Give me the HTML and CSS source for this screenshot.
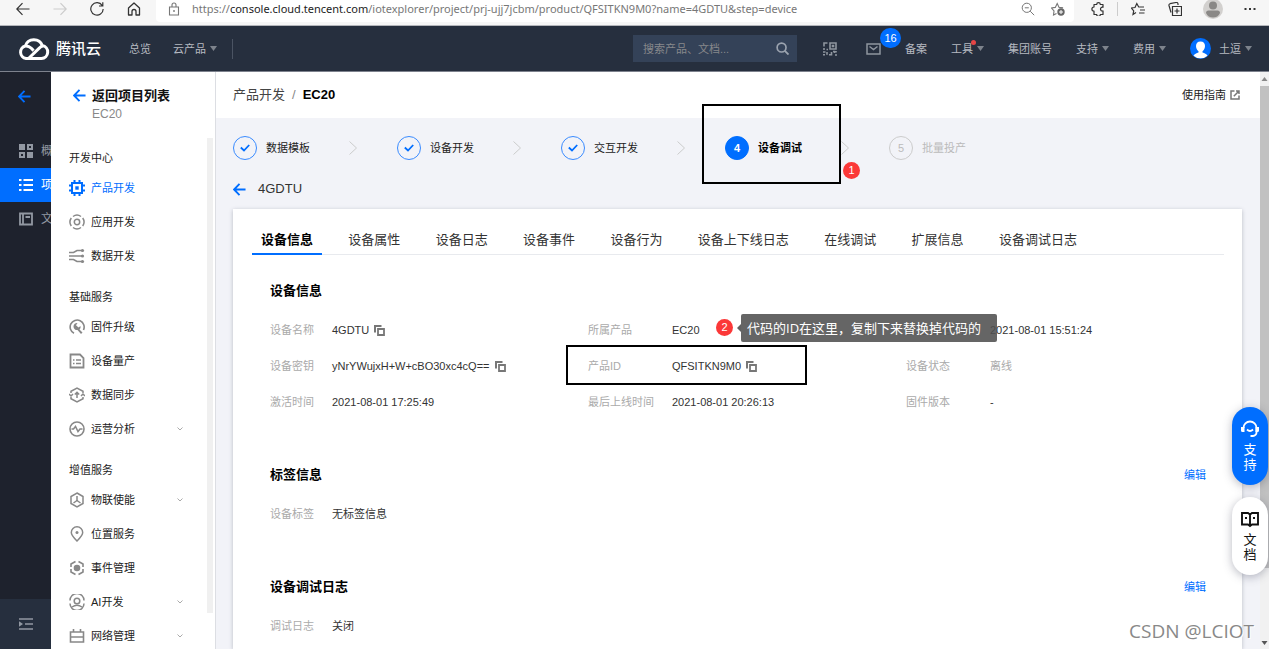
FILE: index.html
```html
<!DOCTYPE html>
<html lang="zh-CN">
<head>
<meta charset="utf-8">
<title>物联网开发平台 - 4GDTU</title>
<link rel="stylesheet" href="styles.css">
</head>
<body>
<svg class="sprite" aria-hidden="true">
  <symbol id="arrow-left" viewBox="0 0 14 14"><path d="M13.500 7H1.500M7 1L1.200 7 7 13" fill="none" stroke="currentColor" stroke-width="2"/></symbol>
  <symbol id="caret" viewBox="0 0 7 5"><path d="M0 0h7L3.500 5z" fill="currentColor"/></symbol>
  <symbol id="chevron-down" viewBox="0 0 8 8"><path d="M1.500 2.500L4 5l2.500-2.500" fill="none" stroke="currentColor"/></symbol>
  <symbol id="chevron-right" viewBox="0 0 8 14"><path d="M.5.5L7.500 7 .5 13.500" fill="none" stroke="currentColor"/></symbol>
  <symbol id="check" viewBox="0 0 10 8"><path d="M.8 3.500L4 6.500 9.200 1" fill="none" stroke="currentColor" stroke-width="1.800"/></symbol>
  <symbol id="copy" viewBox="0 0 11 11"><path d="M1 7.500V1h6.500" fill="none" stroke="currentColor" stroke-width="2"/><path d="M4 4h6v6H4z" fill="none" stroke="currentColor" stroke-width="1.800"/></symbol>
</svg>

<div class="browser">
  <button class="nav-btn" aria-label="后退"><svg viewBox="0 0 14 14"><path d="M13.500 7H1M6.500 1.200L.8 7l5.700 5.800" fill="none" stroke="currentColor" stroke-width="1.200"/></svg></button>
  <button class="nav-btn faded" aria-label="前进"><svg viewBox="0 0 14 14"><path d="M.5 7H13M7.500 1.200L13.200 7l-5.700 5.800" fill="none" stroke="currentColor" stroke-width="1.200"/></svg></button>
  <button class="nav-btn" aria-label="刷新"><svg viewBox="0 0 14 14"><path d="M12.200 3.500A6.200 6.200 0 1 0 13.200 7M12.800.3v3.700H9" fill="none" stroke="currentColor" stroke-width="1.200"/></svg></button>
  <button class="nav-btn" aria-label="主页"><svg viewBox="0 0 14 14"><path d="M1.500 6L7 1l5.500 5v7H9V9.500a2 2 0 0 0-4 0V13H1.500z" fill="none" stroke="currentColor" stroke-width="1.300" stroke-linejoin="round"/></svg></button>
  <div class="address">
    <svg class="lock" viewBox="0 0 12 14"><path d="M1.500 5h9v8h-9zM4 5V3a2 2 0 0 1 4 0v2" fill="none" stroke="currentColor" stroke-width="1.100"/><circle cx="6" cy="9" r=".9" fill="currentColor"/></svg>
    <span class="url">https://<b>console.cloud.tencent.com</b>/iotexplorer/project/prj-ujj7jcbm/product/QFSITKN9M0?name=4GDTU&amp;step=device</span>
    <button class="nav-btn grey" aria-label="缩放"><svg viewBox="0 0 14 14"><circle cx="5.800" cy="5.800" r="4.600" fill="none" stroke="currentColor"/><path d="M9.200 9.200l4 4M3.800 5.800h4" stroke="currentColor"/></svg></button>
    <button class="nav-btn grey" aria-label="收藏"><svg viewBox="0 0 14 14"><path d="M5.500 11.500L2.500 13l.5-4L.5 6l3.800-.6L6.200 1.500l1.900 3.900 4 .5" fill="none" stroke="currentColor" stroke-width="1.100"/><circle cx="10" cy="10" r="3.700" fill="#666"/><path d="M10 8v4M8 10h4" stroke="#fff"/></svg></button>
  </div>
  <button class="nav-btn" aria-label="扩展"><svg viewBox="0 0 14 14"><path d="M3 5V2.500h2.700a1.800 1.800 0 0 1 3.600 0H12V5.300a1.900 1.900 0 1 0 0 3.600v3.600H9.300a1.800 1.800 0 0 1-3.600 0H3V9.200A2.100 2.100 0 0 1 3 5z" fill="none" stroke="currentColor" stroke-width="1.200" stroke-linejoin="round"/></svg></button>
  <span class="separator"></span>
  <button class="nav-btn" aria-label="收藏夹"><svg viewBox="0 0 14 14"><path d="M5 10.500L2 12.500l.7-3.700L.3 6l3.700-.5L5.800 1.500l1.900 3.500H13M9 8h5M8 11h5.500" fill="none" stroke="currentColor" stroke-width="1.200"/></svg></button>
  <button class="nav-btn" aria-label="集锦"><svg viewBox="0 0 14 14"><path d="M4.500 4.500h9v9h-9zM9 6.500v5M6.500 9h5M3 10.500L1 3.500A1.500 1.500 0 0 1 2 1.700L8 .5a1.500 1.500 0 0 1 2 1.500v1" fill="none" stroke="currentColor" stroke-width="1.200"/></svg></button>
  <button class="profile" aria-label="个人资料"><svg viewBox="0 0 20 20"><circle cx="10" cy="10" r="10" fill="#d2d0ce"/><circle cx="10" cy="6.500" r="4" fill="#8a8886"/><path d="M3 14q0-2.500 2.500-2.500h9q2.500 0 2.500 2.500-2 4.500-7 4.500T3 14z" fill="#8a8886"/></svg></button>
  <button class="nav-btn" aria-label="更多"><svg viewBox="0 0 14 14"><path d="M1.500 6h2v2h-2zM6 6h2v2H6zM10.500 6h2v2h-2z" fill="currentColor"/></svg></button>
</div>

<header class="topbar">
  <a class="brand" href="#">
    <svg viewBox="0 0 32 24"><path d="M9 21.500h14.500a6.500 6.500 0 0 0 .8-12.900A9 9 0 0 0 7.300 9 6.400 6.400 0 0 0 8 21.500zM10.500 21.500L21 11.300q2-2 4-2.300M7.300 9q3.500-.3 6 2.300l2.300 2.300" fill="none" stroke="#fff" stroke-width="3" stroke-linejoin="round"/></svg>
    <span>腾讯云</span>
  </a>
  <nav class="main-nav">
    <a href="#">总览</a>
    <a href="#">云产品<svg class="caret"><use href="#caret"/></svg></a>
  </nav>
  <div class="tools">
    <form class="search">
      <input type="text" aria-label="搜索" placeholder="搜索产品、文档...">
      <button type="button" aria-label="搜索"><svg viewBox="0 0 14 14"><circle cx="6" cy="6" r="4.800" fill="none" stroke="currentColor" stroke-width="1.800"/><path d="M9.500 9.500l4 4" stroke="currentColor" stroke-width="2"/></svg></button>
    </form>
    <a class="scan" href="#" aria-label="二维码"><svg class="qr" viewBox="0 0 14 14"><path d="M4.500 1H1v3.500M1 6v2M7 1h6v6H7zM9.500 3.500h1v1h-1zM0 10h2.500M4 12.800V10M0 12.800h2M6 12.800h2.500V10M10 9.500h1.500v1.500M12 13h2M13 9v1.500M3.500 7.500h1.500" fill="none" stroke="currentColor" stroke-width="1.600"/></svg></a>
    <a class="mail" href="#" aria-label="消息"><svg viewBox="0 0 15 12"><path d="M1 1h13v10H1zM3.500 3.500l4 3 4-3" fill="none" stroke="currentColor" stroke-width="1.500"/></svg><span class="count">16</span></a>
    <a href="#">备案</a>
    <a class="dotted" href="#">工具<svg class="caret"><use href="#caret"/></svg></a>
    <a href="#">集团账号</a>
    <a href="#">支持<svg class="caret"><use href="#caret"/></svg></a>
    <a href="#">费用<svg class="caret"><use href="#caret"/></svg></a>
    <a class="account" href="#"><svg class="avatar" viewBox="0 0 21 21"><circle cx="10.500" cy="10.500" r="10.500" fill="#006eff"/><path d="M10.500 3.500c-3 0-4.500 2-4.500 4.500 0 2 1 4 2.500 5.200v1.300c-2 .8-4 1.300-5 3.200a10.500 10.500 0 0 0 14 0c-1-1.900-3-2.400-5-3.200v-1.300C14 12 15 10 15 8c0-2.500-1.500-4.500-4.500-4.500z" fill="#fff"/></svg>土逗<svg class="caret"><use href="#caret"/></svg></a>
  </div>
</header>

<div class="workspace">
  <nav class="rail">
    <a class="rail-back" href="#" aria-label="返回"><svg><use href="#arrow-left"/></svg></a>
    <a href="#"><svg viewBox="0 0 14 14"><path d="M0 0h6v6H0zM8 8h6v6H8z" fill="currentColor"/><path d="M9 1h4v4H9zM1 9h4v4H1z" fill="none" stroke="currentColor" stroke-width="2"/></svg>概览</a>
    <a class="active" href="#"><svg viewBox="0 0 14 14"><path d="M0 2h2.500M4.500 2H14M0 7h2.500M4.500 7H14M0 12h2.500M4.500 12H14" stroke="currentColor" stroke-width="2"/></svg>项目管理</a>
    <a href="#"><svg viewBox="0 0 14 14"><path d="M1 1.500h12v11H1zM4 1.500v11M6.500 5H11" fill="none" stroke="currentColor" stroke-width="1.800"/></svg>文档</a>
    <button class="collapse" aria-label="展开菜单"><svg viewBox="0 0 14 14"><path d="M0 2h14M6 7h8M0 12h14" stroke="currentColor" stroke-width="1.600"/><path d="M0 4.200L4 7 0 9.800z" fill="currentColor"/></svg></button>
  </nav>

  <aside class="sidebar">
    <div class="sidebar-head">
      <a href="#"><svg><use href="#arrow-left"/></svg>返回项目列表</a>
      <p>EC20</p>
    </div>
    <nav class="menu">
      <h2>开发中心</h2>
      <a class="active" href="#"><svg viewBox="0 0 16 16"><path d="M3 3h10v10H3z" fill="none" stroke="currentColor" stroke-width="2"/><path d="M6.300 6.300h3.400v3.400H6.300z" fill="currentColor"/><path d="M5.500 0v3M10.500 0v3M5.500 13v3M10.500 13v3M0 5.500h3M0 10.500h3M13 5.500h3M13 10.500h3" stroke="currentColor" stroke-width="2"/></svg>产品开发</a>
      <a href="#"><svg viewBox="0 0 16 16"><g fill="none" stroke="currentColor" stroke-width="1.500"><circle cx="8" cy="8" r="2.700"/><path d="M4 2.500a7 7 0 0 1 8 0M4 13.500a7 7 0 0 0 8 0M2.300 4a7 7 0 0 0 0 8M13.700 4a7 7 0 0 1 0 8"/></g></svg>应用开发</a>
      <a href="#"><svg viewBox="0 0 16 16"><path d="M0 4.500h4.500L8 2.500h6M0 8h14M0 11.500h4.500l3.500 2h6" fill="none" stroke="currentColor" stroke-width="1.600"/><g fill="currentColor"><circle cx="13.500" cy="2.500" r="1.600"/><circle cx="13.500" cy="8" r="1.600"/><circle cx="13.500" cy="13.500" r="1.600"/></g></svg>数据开发</a>
      <h2>基础服务</h2>
      <a href="#"><svg viewBox="0 0 16 16"><path d="M5 14.300A7 7 0 1 1 14.500 11" fill="none" stroke="currentColor" stroke-width="1.600"/><path d="M4.500 7.500A3.500 3.500 0 0 1 8.500 4L7 6.200 9.500 8.500 11.500 7a3.500 3.500 0 0 1-1 3.500l3 3-1.500 1.500-3.500-4a3.500 3.500 0 0 1-4-3.500z" fill="currentColor"/></svg>固件升级</a>
      <a href="#"><svg viewBox="0 0 16 16"><path d="M1.500 1.500h9.500l3.500 3.500v9.500h-13z" fill="none" stroke="currentColor" stroke-width="1.800"/><path d="M4 7h1.500M7 7h5M4 10.500h1.500M7 10.500h5" stroke="currentColor" stroke-width="1.600"/></svg>设备量产</a>
      <a href="#"><svg viewBox="0 0 16 16"><path d="M2 6V4.300L8 1l6 3.300V6M2 10v1.700L8 15l6-3.300V10M0 7l2 2 2-2M12 9l2-2 2 2M8 11V6M5.800 7.500L8 5.300l2.200 2.200" fill="none" stroke="currentColor" stroke-width="1.500"/></svg>数据同步</a>
      <a href="#"><svg viewBox="0 0 16 16"><circle cx="8" cy="8" r="7" fill="none" stroke="currentColor" stroke-width="1.600"/><path d="M2.500 8h2L6.500 5.500 9 10.500 11 8h2.500" fill="none" stroke="currentColor" stroke-width="1.500"/></svg>运营分析<svg class="more"><use href="#chevron-down"/></svg></a>
      <h2>增值服务</h2>
      <a href="#"><svg viewBox="0 0 16 16"><path d="M8 1l6 3.500v7L8 15l-6-3.500v-7zM8 4v4.500M8 8.500L4.500 11M8 8.500l3.500 2.500" fill="none" stroke="currentColor" stroke-width="1.500"/></svg>物联使能<svg class="more"><use href="#chevron-down"/></svg></a>
      <a href="#"><svg viewBox="0 0 16 16"><path d="M8 15C4.500 11.500 2.300 9 2.300 6.500a5.700 5.700 0 0 1 11.400 0C13.700 9 11.500 11.500 8 15z" fill="none" stroke="currentColor" stroke-width="1.500"/><circle cx="8" cy="6.500" r="1.500" fill="currentColor"/></svg>位置服务</a>
      <a href="#"><svg viewBox="0 0 16 16"><path d="M6.500 1.500L2 4v3M9.500 1.500L14 4v3M2 9v3l4.500 2.500M14 9v3l-4.500 2.500" fill="none" stroke="currentColor" stroke-width="1.600"/><circle cx="8" cy="8" r="3.300" fill="currentColor"/></svg>事件管理</a>
      <a href="#"><svg viewBox="0 0 16 16"><g fill="none" stroke="currentColor" stroke-width="1.500"><path d="M1 6.500a7 7 0 0 1 14 0M1 9.500a7 7 0 0 0 14 0M3 13q5-3.500 10 0"/><circle cx="8" cy="7" r="2.800"/></g></svg>AI开发<svg class="more"><use href="#chevron-down"/></svg></a>
      <a href="#"><svg viewBox="0 0 16 16"><path d="M1.500 4h13v10h-13zM1.500 9h13M4.500 1v3M11.500 1v3" fill="none" stroke="currentColor" stroke-width="1.600"/></svg>网络管理<svg class="more"><use href="#chevron-down"/></svg></a>
    </nav>
    <span class="menu-scroll"></span>
  </aside>

  <main class="content">
    <div class="crumbs">
      <a href="#">产品开发</a><i>/</i><strong>EC20</strong>
      <a class="guide" href="#">使用指南<svg viewBox="0 0 10 10"><path d="M4.500 1H1v8h8V5.500M3.800 6.200L8.500 1.500M6 1h3v3" fill="none" stroke="currentColor" stroke-width="1.500"/></svg></a>
    </div>

    <ol class="steps">
      <li class="done"><span class="mark"><svg><use href="#check"/></svg></span>数据模板<svg class="next"><use href="#chevron-right"/></svg></li>
      <li class="done"><span class="mark"><svg><use href="#check"/></svg></span>设备开发<svg class="next"><use href="#chevron-right"/></svg></li>
      <li class="done"><span class="mark"><svg><use href="#check"/></svg></span>交互开发<svg class="next"><use href="#chevron-right"/></svg></li>
      <li class="current"><span class="mark">4</span>设备调试<svg class="next"><use href="#chevron-right"/></svg></li>
      <li class="todo"><span class="mark">5</span>批量投产</li>
    </ol>

    <a class="device-back" href="#"><svg><use href="#arrow-left"/></svg>4GDTU</a>

    <section class="card">
      <nav class="tabs">
        <a class="active" href="#">设备信息</a>
        <a href="#">设备属性</a>
        <a href="#">设备日志</a>
        <a href="#">设备事件</a>
        <a href="#">设备行为</a>
        <a href="#">设备上下线日志</a>
        <a href="#">在线调试</a>
        <a href="#">扩展信息</a>
        <a href="#">设备调试日志</a>
      </nav>

      <section class="block">
        <h3>设备信息</h3>
        <div class="details">
          <dl>
            <dt>设备名称</dt><dd>4GDTU<button class="copy" aria-label="复制设备名称"><svg><use href="#copy"/></svg></button></dd>
            <dt>设备密钥</dt><dd>yNrYWujxH+W+cBO30xc4cQ==<button class="copy" aria-label="复制设备密钥"><svg><use href="#copy"/></svg></button></dd>
            <dt>激活时间</dt><dd>2021-08-01 17:25:49</dd>
          </dl>
          <dl class="wide">
            <dt>所属产品</dt><dd>EC20</dd>
            <dt>产品ID</dt><dd>QFSITKN9M0<button class="copy" aria-label="复制产品ID"><svg><use href="#copy"/></svg></button></dd>
            <dt>最后上线时间</dt><dd>2021-08-01 20:26:13</dd>
          </dl>
          <dl class="wide">
            <dt>设备创建时间</dt><dd>2021-08-01 15:51:24</dd>
            <dt>设备状态</dt><dd class="offline">离线</dd>
            <dt>固件版本</dt><dd>-</dd>
          </dl>
        </div>
      </section>

      <section class="block">
        <h3>标签信息<a href="#">编辑</a></h3>
        <dl><dt>设备标签</dt><dd>无标签信息</dd></dl>
      </section>

      <section class="block">
        <h3>设备调试日志<a href="#">编辑</a></h3>
        <dl><dt>调试日志</dt><dd>关闭</dd></dl>
      </section>
    </section>
  </main>

  <div class="scrollbar">
    <svg viewBox="0 0 9 14"><path d="M1.500 9h6l-3-4z" fill="#888"/></svg>
    <span></span>
    <svg viewBox="0 0 9 14"><path d="M1.500 6h6l-3 4z" fill="#555"/></svg>
  </div>
</div>

<div class="floaters">
  <button class="support"><svg viewBox="0 0 18 18"><path d="M2.500 8a6.500 6.500 0 0 1 13 0v4.500a3.500 3.500 0 0 1-3.500 3.500H9.500M6 9.500q3 3 6 0" fill="none" stroke="currentColor" stroke-width="1.800"/><path d="M0 7h3.500v5H1.500A1.500 1.500 0 0 1 0 10.500zM18 7h-3.500v5h2a1.500 1.500 0 0 0 1.500-1.500z" fill="currentColor"/></svg><span>支</span><span>持</span></button>
  <button class="docs"><svg viewBox="0 0 18 18"><path d="M1 3h6l2 1.500L11 3h6v11.500h-6L9 16l-2-1.500H1zM9 4.500V16" fill="none" stroke="currentColor" stroke-width="1.900"/><path d="M4 8h2M12 8h2" stroke="currentColor" stroke-width="2"/></svg><span>文</span><span>档</span></button>
</div>

<div class="frame frame-step"></div>
<div class="frame frame-id"></div>
<span class="pin pin-one">1</span>
<span class="pin pin-two">2</span>
<div class="note">代码的ID在这里，复制下来替换掉代码的</div>
<div class="watermark">CSDN @LCIOT</div>
</body>
</html>
```
FILE: styles.css
```css
* { box-sizing: border-box; }

body {
  position: relative;
  display: flex;
  flex-direction: column;
  height: 100vh;
  margin: 0;
  overflow: hidden;
  font: 11px/20px "Liberation Sans", "Noto Sans CJK SC", sans-serif;
  color: #222;
}

a { color: inherit; text-decoration: none; }
button { padding: 0; border: 0; background: none; color: inherit; font: inherit; }
svg { display: block; flex: none; }
h2, h3, p, dl, dd, ol { margin: 0; padding: 0; }
.sprite { position: absolute; width: 0; height: 0; }

/* Browser toolbar */
.browser {
  display: flex;
  flex: none;
  align-items: center;
  height: 26px;
  padding: 0 12px 8px 16px;
  background: #f6f6f6;
  border-bottom: 1px solid #b4b6bb;
  color: #333;
}
.nav-btn { margin-right: 23px; }
.nav-btn:last-child { margin-right: 0; }
.nav-btn svg { width: 14px; height: 14px; }
.faded { color: #ccc; }
.grey { margin: 0 0 0 16px; color: #777; }
.address {
  display: flex;
  flex: 1;
  align-items: center;
  height: 26px;
  margin: 0 17px 0 -8px;
  padding: 0 9px 0 12px;
  background: #fff;
  border-radius: 4px;
}
.lock { width: 12px; height: 14px; margin-right: 12px; color: #777; }
.url {
  flex: 1;
  overflow: hidden;
  white-space: nowrap;
  font: 11px/18px "Noto Sans", sans-serif;
  color: #777;
}
.url b { font-weight: 400; color: #222; }
.separator { width: 1px; height: 14px; margin: 0 13px 0 -11px; background: #ccc; }
.profile { margin: 0 20px 0 -2px; }
.profile svg { width: 20px; height: 20px; }

/* Console header */
.topbar {
  display: flex;
  flex: none;
  align-items: center;
  height: 46px;
  padding: 0 17px 0 18px;
  background: #262f3e;
  border-bottom: 1px solid #7d828d;
  color: #b6bac1;
}
.brand { display: flex; align-items: center; gap: 6px; margin-right: 28px; font-size: 15px; font-weight: 500; color: #fff; }
.brand svg { width: 32px; height: 24px; }
.main-nav { display: flex; gap: 22px; padding-right: 15px; border-right: 1px solid #4b5463; }
.main-nav a, .tools a { display: flex; align-items: center; }
.caret { width: 7px; height: 5px; margin-left: 4px; color: #7d838c; }
.tools { display: flex; align-items: center; gap: 24px; margin-left: auto; }
.search { display: flex; align-items: center; width: 164px; height: 27px; padding: 0 8px 0 10px; background: #344258; }
.search input { flex: 1; min-width: 0; padding: 0; border: 0; outline: 0; background: none; color: #fff; font: inherit; }
.search input::placeholder { color: #87888b; }
.search svg { width: 13px; height: 13px; color: #9ba3af; }
.scan { margin-left: 2px; color: #8f969f; }
.qr { width: 14px; height: 14px; }
.tools .mail { position: relative; margin-left: 5px; color: #8f969f; }
.mail svg { width: 15px; height: 12px; }
.count {
  position: absolute;
  left: 14px;
  bottom: 7px;
  width: 21px;
  border-radius: 10px;
  background: #006eff;
  color: #fff;
  text-align: center;
}
.dotted { position: relative; }
.dotted::after { content: ""; position: absolute; top: 1px; left: 20px; width: 5px; height: 5px; border-radius: 50%; background: #e54545; }
.avatar { width: 21px; height: 21px; margin-right: 8px; }

/* Body columns */
.workspace { display: flex; flex: 1; min-height: 0; }

.rail { display: flex; flex: none; flex-direction: column; width: 51px; overflow: hidden; background: #1e222d; color: #9298a2; }
.rail a { display: flex; flex: none; align-items: center; gap: 8px; height: 34px; padding-left: 19px; white-space: nowrap; font-size: 12px; }
.rail svg { width: 14px; height: 14px; }
.rail .rail-back { height: 48px; margin-bottom: 14px; padding-left: 18px; color: #006eff; }
.rail-back svg { width: 13px; height: 13px; }
.rail .active { background: #006eff; color: #fff; }
.collapse { height: 50px; margin-top: auto; padding-left: 19px; background: #262f3e; }

.sidebar { position: relative; display: flex; flex: none; flex-direction: column; width: 165px; overflow: hidden; border-right: 1px solid #dcdee3; background: #fff; }
.sidebar-head { flex: none; height: 62px; padding: 14px 0 0 22px; }
.sidebar-head a { display: flex; align-items: center; gap: 6px; font-size: 13px; font-weight: 700; line-height: 19px; color: #111; }
.sidebar-head svg { width: 13px; height: 13px; color: #006eff; }
.sidebar-head p { padding-left: 19px; font-size: 12px; line-height: 19px; color: #888; }
.menu { padding: 0 31px 0 18px; }
.menu h2 { padding-top: 11px; font-size: 11px; font-weight: 400; line-height: 26px; }
.menu a { display: flex; align-items: center; gap: 6px; height: 34px; }
.menu svg { width: 16px; height: 16px; color: #888; }
.menu .active, .menu .active svg { color: #006eff; }
.menu .more { width: 8px; height: 8px; margin-left: auto; color: #aaa; }
.menu-scroll { position: absolute; top: 66px; right: 2px; bottom: 36px; width: 6px; background: #f0f0f0; }

.content { display: flex; flex: 1; flex-direction: column; min-width: 0; background: #f2f3f8; }
.crumbs { display: flex; flex: none; align-items: center; height: 46px; padding: 0 20px 0 17px; background: #fff; font-size: 13px; color: #444; }
.crumbs i { margin: 0 7px; font-style: normal; color: #888; }
.crumbs strong { color: #000; }
.guide { display: flex; align-items: center; gap: 4px; margin-left: auto; font-size: 11px; color: #222; }
.guide svg { width: 10px; height: 10px; color: #777; }

.steps { display: flex; flex: none; margin: 18px 0 19px 17px; list-style: none; }
.steps li { display: flex; align-items: center; width: 164px; padding-right: 40px; white-space: nowrap; }
.mark { display: flex; align-items: center; justify-content: center; width: 24px; height: 24px; margin-right: 9px; border: 1px solid #3a8bff; border-radius: 50%; color: #006eff; }
.mark svg { width: 10px; height: 8px; }
.next { width: 8px; height: 14px; margin-left: auto; color: #ccc; }
.current { font-weight: 700; color: #000; }
.current .mark { background: #006eff; border-color: #006eff; color: #fff; }
.todo { color: #bbb; }
.todo .mark { border-color: #ccc; color: #bbb; }

.device-back { display: flex; flex: none; align-items: center; gap: 12px; height: 20px; margin: 0 0 10px 17px; font-size: 13px; color: #333; }
.device-back svg { width: 13px; height: 13px; color: #006eff; }

.card { flex: 1; min-height: 0; margin: 0 18px 0 17px; padding: 18px 18px 0 19px; background: #fff; box-shadow: 0 1px 4px rgba(54, 58, 80, .3); }
.tabs { display: flex; justify-content: space-between; padding-right: 138px; box-shadow: inset 0 -1px #e8eaee; font-size: 13px; color: #333; }
.tabs a { height: 28px; padding: 0 9px; line-height: 26px; white-space: nowrap; }
.tabs .active { border-bottom: 2px solid #006eff; font-weight: 700; color: #000; }

.block { padding-left: 18px; margin-bottom: 45px; }
.tabs + .block { margin-top: 26px; }
.block h3 { display: flex; margin-bottom: 11px; padding-right: 18px; font-size: 13px; color: #000; }
.block h3 a { margin-left: auto; font-size: 11px; font-weight: 400; color: #006eff; }
.details { display: grid; grid-template-columns: repeat(3, 1fr); }
dl { display: grid; grid-template-columns: 62px 1fr; align-content: start; line-height: 36px; color: #333; white-space: nowrap; }
.wide { grid-template-columns: 84px 1fr; }
dt { color: #aaa; }
dd { display: flex; align-items: center; height: 36px; }
.offline { color: #aaa; }
.copy { margin-left: 5px; color: #777; }
.copy svg { width: 11px; height: 11px; }

.scrollbar { display: flex; flex: none; flex-direction: column; justify-content: space-between; width: 9px; background: #f1f1f1; }
.scrollbar svg { width: 9px; height: 14px; }
.scrollbar span { flex: 1; margin-bottom: 67px; background: #c1c1c1; }

/* Floating help buttons */
.floaters { position: absolute; right: 1px; bottom: 74px; display: grid; gap: 12px; }
.floaters button { display: flex; flex-direction: column; align-items: center; width: 36px; height: 78px; padding-top: 13px; border-radius: 18px; font-size: 13px; line-height: 15px; box-shadow: 0 2px 10px rgba(54, 58, 80, .35); }
.floaters svg { width: 18px; height: 18px; margin-bottom: 4px; }
.support { background: #006eff; color: #fff; }
.docs { background: #fff; color: #111; }

/* Annotations drawn over the console */
.frame { position: absolute; border: 2px solid #000; }
.frame-step { left: 702px; top: 104px; width: 139px; height: 80px; }
.frame-id { left: 566px; top: 345px; width: 241px; height: 40px; }
.pin { position: absolute; width: 17px; height: 17px; border-radius: 50%; background: #fb3838; color: #fff; line-height: 17px; text-align: center; }
.pin-one { left: 843px; top: 162px; }
.pin-two { left: 716px; top: 319px; }
.note {
  position: absolute;
  left: 741px;
  top: 314px;
  width: 256px;
  height: 28px;
  padding-left: 6px;
  border-radius: 2px;
  background: rgba(80, 80, 80, .88);
  color: #fff;
  font: 13px/28px "Open Sans", "Noto Sans CJK SC", sans-serif;
  white-space: nowrap;
}
.note::before { content: ""; position: absolute; left: -4px; top: 10px; border: 4px solid transparent; border-left: 0; border-right-color: #606060; }
.watermark { position: absolute; right: 15px; bottom: 4px; font: 19px/28px "Open Sans", sans-serif; color: #888; text-shadow: 1px 1px #fff; }
```
